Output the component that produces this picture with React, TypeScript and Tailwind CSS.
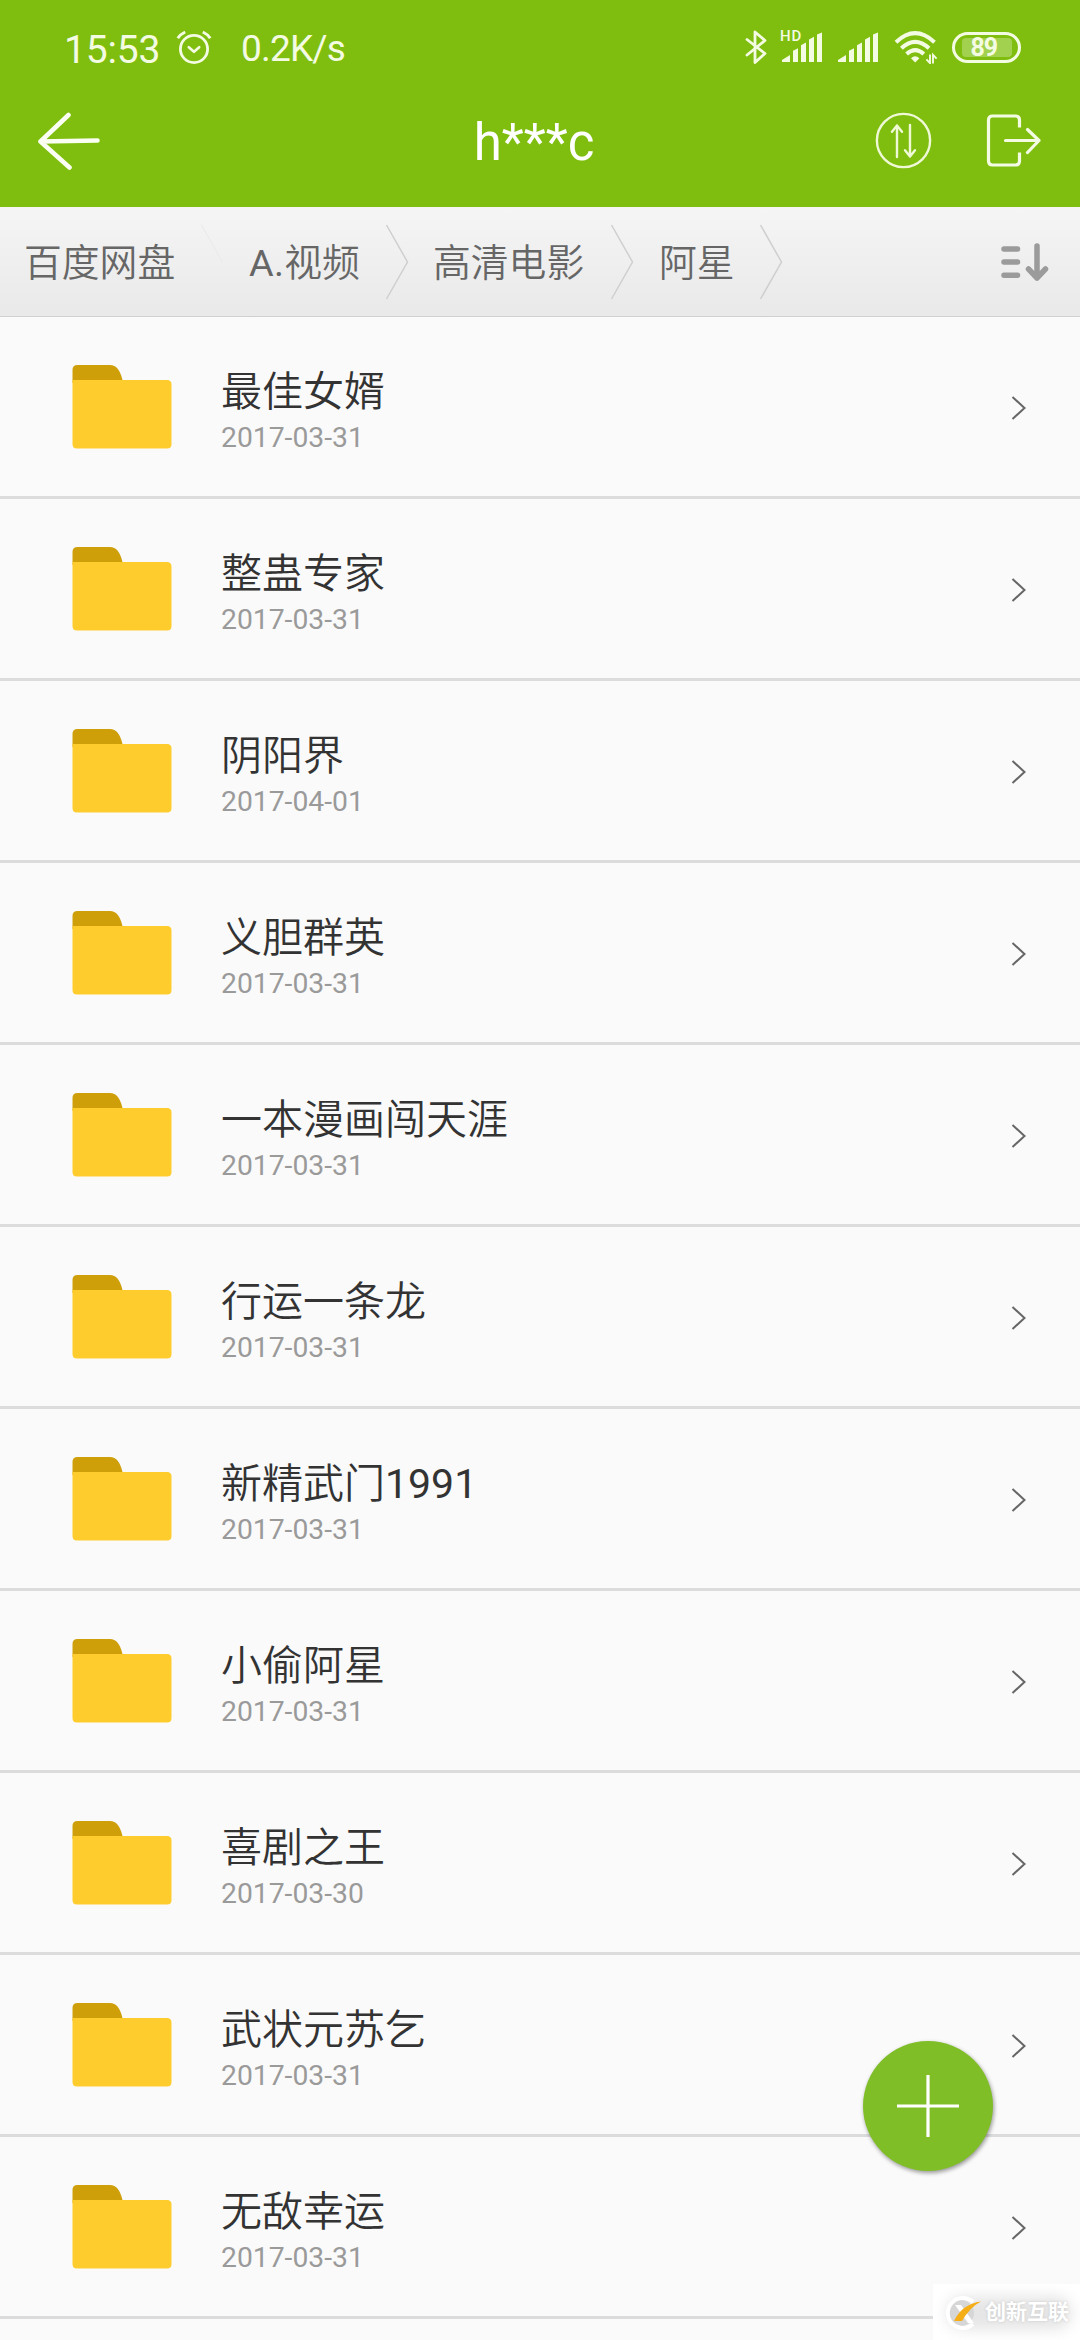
import React from "react";

const folders = [
  { name: "最佳女婿", date: "2017-03-31" },
  { name: "整蛊专家", date: "2017-03-31" },
  { name: "阴阳界", date: "2017-04-01" },
  { name: "义胆群英", date: "2017-03-31" },
  { name: "一本漫画闯天涯", date: "2017-03-31" },
  { name: "行运一条龙", date: "2017-03-31" },
  { name: "新精武门", latin: "1991", date: "2017-03-31" },
  { name: "小偷阿星", date: "2017-03-31" },
  { name: "喜剧之王", date: "2017-03-30" },
  { name: "武状元苏乞", date: "2017-03-31" },
  { name: "无敌幸运", date: "2017-03-31" },
];

function AlarmIcon() {
  return (
    <svg className="ml-[17px] h-[36px] w-[36px] shrink-0" viewBox="0 0 36 36" fill="none" stroke="#f4fbe3" strokeWidth="2.8" strokeLinecap="round" strokeLinejoin="round">
      <circle cx="18" cy="20" r="13.6" />
      <path d="M12.8 18.2l5.2 4.6 5.2-4.6" strokeWidth="2.6" />
      <path d="M1.8 9.2q2.6-4 7.4-6.2M34.2 9.2q-2.6-4-7.4-6.2" strokeWidth="3" strokeLinecap="butt" />
    </svg>
  );
}

function BluetoothIcon() {
  return (
    <svg className="h-[36px] w-[22px] shrink-0" viewBox="0 0 22 36" fill="none" stroke="#f4fbe3" strokeWidth="2.8" strokeLinejoin="round" strokeLinecap="round">
      <path d="M2 10.500l18 14-10 9V3l10 8.500L2 26" />
    </svg>
  );
}

function SignalIcon({ className }: { className: string }) {
  return (
    <svg className={className} viewBox="0 0 41 30" fill="#f4fbe3">
      <path d="M0 30v-2l8-5v7z" />
      <path d="M11 30V18.8l5-2.6V30z" />
      <path d="M19 30V13.2l5-2.6V30z" />
      <path d="M27 30V7.6l5-2.8V30z" />
      <path d="M35 30V2.6L40 .4V30z" />
    </svg>
  );
}

function WifiIcon() {
  return (
    <svg className="ml-[15px] h-[34px] w-[44px] shrink-0" viewBox="0 0 44 34" fill="none" stroke="#f4fbe3">
      <path d="M2 12.2q19-18 38.500 0" strokeWidth="4" />
      <path d="M7.400 18.200q13.800-12.800 27.600 0" strokeWidth="4" />
      <path d="M12.600 24q8.600-7.800 17.200 0" strokeWidth="4" />
      <path d="M17 28.200q4.200-3.800 8.400 0l-4.200 4.200z" fill="#f4fbe3" stroke="none" />
      <path d="M36 24.500v8.600l-3.600-3.800M39 33.500v-8.600l3.600 3.800" strokeWidth="1.9" />
    </svg>
  );
}

function StatusBar() {
  return (
    <div className="flex h-[94px] items-center pl-[64px] pr-[59px] text-[#f4fbe3]">
      <span className="w-[95px] whitespace-nowrap text-[39px] leading-[40px] tracking-[-0.2px] pt-[5px]">15:53</span>
      <AlarmIcon />
      <span className="ml-[29px] whitespace-nowrap pt-[4px] text-[37px] leading-[40px] tracking-[-0.8px]">0.2K/s</span>
      <div className="ml-auto flex items-center">
        <BluetoothIcon />
        <div className="relative ml-[15px] h-[30px] w-[41px]">
          <SignalIcon className="h-[30px] w-[41px]" />
          <span className="absolute -left-[2px] -top-[3px] text-[15px] font-medium leading-[15px] tracking-[0.8px]">HD</span>
        </div>
        <SignalIcon className="ml-[15px] h-[30px] w-[41px] shrink-0" />
        <WifiIcon />
        <div className="ml-[14px] flex h-[31px] w-[69px] items-center justify-center rounded-full border-[3px] border-[#f4fbe3]">
          <div className="flex h-[19px] w-[50px] items-center rounded-[4px] bg-[#a2d04f] pl-[9px]">
            <span className="text-[25px] font-bold leading-[19px] tracking-[-1px]">89</span>
          </div>
        </div>
      </div>
    </div>
  );
}

function TitleBar() {
  return (
    <div className="grid h-[113px] grid-cols-[220px_1fr_220px] items-start">
      <svg className="ml-[36px] mt-[18px] h-[58px] w-[66px]" viewBox="0 0 66 58" fill="none" stroke="#fbfef2" strokeWidth="4.600" strokeLinecap="round" strokeLinejoin="round">
        <path d="M32.500 3L4.500 29.500 33.500 55.500M4.500 29.500l57-1" />
      </svg>
      <h1 className="pt-[20px] pr-[12px] text-center text-[51px] font-normal leading-[58px] text-white">h***c</h1>
      <div className="flex pt-[18px]">
        <svg className="ml-[15px] h-[58px] w-[58px] shrink-0" viewBox="0 0 58 58" fill="none" stroke="#eff9d6" strokeWidth="2.400" strokeLinecap="round" strokeLinejoin="round">
          <circle cx="28.500" cy="28.500" r="26.600" />
          <path d="M22 45V13.500l-5 6.200M22 13.500l5 6.200M35 13v31.500l-5-6.200M35 44.500l5-6.200" />
        </svg>
        <svg className="ml-[51px] h-[58px] w-[60px] shrink-0" viewBox="0 0 60 58" fill="none" stroke="#f4fbe3" strokeWidth="3.200" strokeLinecap="round" strokeLinejoin="round">
          <path d="M35.500 15.500V8q0-4-4-4H8.500Q4.500 4 4.500 8v41q0 4 4 4h23q4 0 4-4v-8.500" strokeLinecap="butt" />
          <path d="M21.500 28.500H55M43.500 17.500L55 28.500 43.500 40.500" />
        </svg>
      </div>
    </div>
  );
}

function CrumbArrow({ className, faded = false }: { className: string; faded?: boolean }) {
  return (
    <svg className={className} viewBox="0 0 24 76" fill="none">
      {faded ? (
        <path d="M1.500 1l21 37" stroke="#ebebeb" strokeWidth="1.400" />
      ) : (
        <path d="M1.500 1l21 37-21 37" stroke="#cfcfcf" strokeWidth="1.500" />
      )}
    </svg>
  );
}

function Breadcrumbs() {
  return (
    <nav className="flex h-[110px] items-center whitespace-nowrap border-b border-[#d0d0d0] bg-linear-to-b from-[#f5f5f5] to-[#e9e9e9] text-[37.800px] font-[350] leading-[54px] text-[#666]">
      <span className="ml-[24px] w-[153px] pt-[3px]">百度网盘</span>
      <CrumbArrow faded className="ml-[23px] h-[76px] w-[24px] shrink-0" />
      <span className="ml-[25px] w-[113px] pt-[3px]">
        <span className="font-normal tracking-[0.3px]">A.</span>视频
      </span>
      <CrumbArrow className="ml-[23px] h-[76px] w-[24px] shrink-0" />
      <span className="ml-[24px] w-[153px] pt-[3px]">高清电影</span>
      <CrumbArrow className="ml-[24px] h-[76px] w-[24px] shrink-0" />
      <span className="ml-[25px] w-[76px] pt-[3px]">阿星</span>
      <CrumbArrow className="ml-[24px] h-[76px] w-[24px] shrink-0" />
      <svg className="ml-auto mr-[30px] h-[42px] w-[50px] shrink-0" viewBox="0 0 50 42" fill="none" stroke="#9b9b9b" strokeWidth="5.500" strokeLinecap="round" strokeLinejoin="round">
        <path d="M4 8h13.500M4 21h13.500M4 34.300h13.500" />
        <path d="M37 5v32M28.500 28l8.500 9 8.500-9" />
      </svg>
    </nav>
  );
}

function FolderIcon() {
  return (
    <svg className="ml-[72px] mt-[48px] h-[84px] w-[100px] shrink-0" viewBox="0 0 100 84">
      <path d="M.5 18V5q0-5 5-5H38q9 0 12.500 15v3z" fill="#cf9f0a" />
      <path d="M.5 15H95q4.500 0 4.500 4.500v59.500q0 4.500-4.500 4.500H5q-4.500 0-4.500-4.500z" fill="#ffcc2e" />
    </svg>
  );
}

function FolderRow({ name, latin, date }: { name: string; latin?: string; date: string }) {
  return (
    <li className="flex h-[182px] items-start border-b-[3px] border-[#dcdcdc]">
      <FolderIcon />
      <div className="ml-[49px] flex flex-col pt-[48px]">
        <span className="text-[41px] font-[350] leading-[54px] text-[#333]">
          {name}
          {latin && <span className="font-normal">{latin}</span>}
        </span>
        <span className="mt-[2px] text-[28.300px] leading-[34px] text-[#9a9a9a]">{date}</span>
      </div>
      <svg className="ml-auto mr-[53px] mt-[77.500px] h-[26px] w-[16px]" viewBox="0 0 16 26" fill="none" stroke="#666" strokeWidth="2">
        <path d="M1.500 2l12 11-12 11" />
      </svg>
    </li>
  );
}

function Watermark() {
  return (
    <div className="absolute bottom-0 right-0 flex h-[56px] w-[147px] items-center overflow-hidden bg-white">
      <div className="absolute left-[13px] top-[12px] h-[34px] w-[126px] rounded-full bg-[#e6e6e6] blur-[7px]" />
      <svg className="relative ml-[11px] h-[36px] w-[40px] shrink-0" viewBox="0 0 40 36">
        <circle cx="17" cy="19" r="13" fill="#d6d6d6" />
        <path d="M29 8A15 15 0 1 0 29 30" fill="none" stroke="#fff" strokeWidth="4" />
        <path d="M11 11h6l13 18h-6z" fill="#fff" />
        <path d="M10 27Q18 10 37 7.500 26 13 18 27z" fill="#f5ae16" />
      </svg>
      <span className="relative ml-px whitespace-nowrap text-[21px] font-bold leading-[24px] text-white [text-shadow:0_0_3px_#c8c8c8]">创新互联</span>
    </div>
  );
}

export default function App() {
  return (
    <div className="relative h-[2340px] w-[1080px] overflow-hidden bg-[#fafafa] font-[Roboto,'Noto_Sans_CJK_SC',sans-serif]">
      <header className="h-[207px] bg-[#7fbe0e]">
        <StatusBar />
        <TitleBar />
      </header>
      <Breadcrumbs />
      <ul>
        {folders.map((f) => (
          <FolderRow key={f.name} name={f.name} latin={f.latin} date={f.date} />
        ))}
      </ul>
      <button aria-label="新建" className="absolute left-[863px] top-[2041px] flex h-[130px] w-[130px] items-center justify-center rounded-full bg-[#80be28] shadow-[1px_2px_4px_rgba(0,0,0,0.4)]">
        <svg className="h-[62px] w-[62px]" viewBox="0 0 62 62" stroke="#fff" strokeWidth="3.200">
          <path d="M31 0v62M0 31h62" />
        </svg>
      </button>
      <Watermark />
    </div>
  );
}
